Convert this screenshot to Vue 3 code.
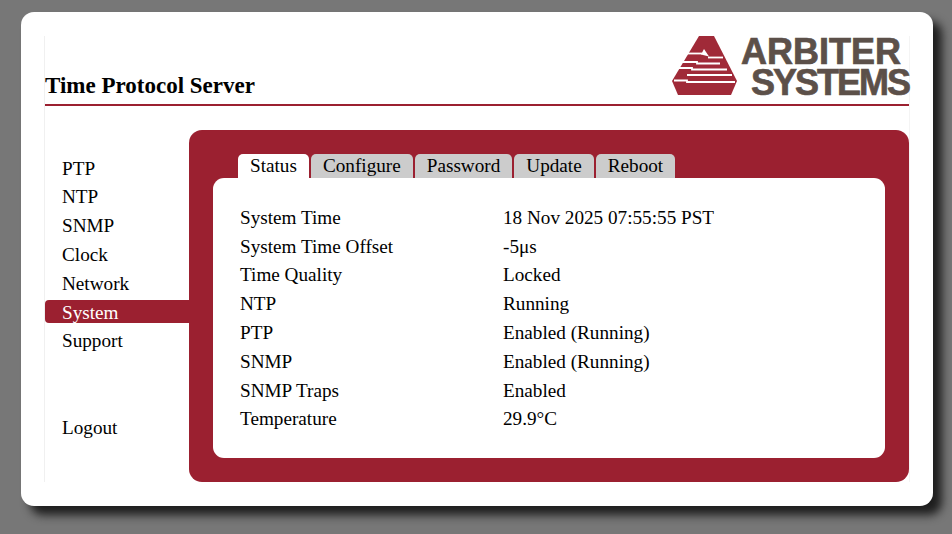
<script setup>
const navItems = [
  { label: 'PTP' },
  { label: 'NTP' },
  { label: 'SNMP' },
  { label: 'Clock' },
  { label: 'Network' },
  { label: 'System', active: true },
  { label: 'Support' },
  { label: '' },
  { label: '' },
  { label: 'Logout' }
]

const tabs = [
  { label: 'Status', active: true },
  { label: 'Configure' },
  { label: 'Password' },
  { label: 'Update' },
  { label: 'Reboot' }
]

const rows = [
  ['System Time', '18 Nov 2025 07:55:55 PST'],
  ['System Time Offset', '-5μs'],
  ['Time Quality', 'Locked'],
  ['NTP', 'Running'],
  ['PTP', 'Enabled (Running)'],
  ['SNMP', 'Enabled (Running)'],
  ['SNMP Traps', 'Enabled'],
  ['Temperature', '29.9°C']
]
</script>

<template>
  <div class="page">
    <div class="card">
      <div class="inner">
        <header class="header">
          <h1 class="title">Time Protocol Server</h1>
          <svg class="logo" width="237" height="68" viewBox="0 0 237 68">
            <polygon points="27,0 42,0 65,45 59,59 6,59 0,45" fill="#a02a38" />
            <polygon points="32,13 37,20.5 29,18.5" fill="#fff" />
            <g fill="none" stroke="#fff" stroke-width="1.8">
              <polyline points="15,17.5 30,17.5" />
              <polyline points="36,21.5 51,21.5" />
              <polyline points="10,26 25,26 25,27.5 48,27.5" />
              <polyline points="7,32 20,32 20,33.5 55,33.5" />
              <polyline points="15,39 60,39" />
              <polyline points="2,44.5 15,44.5 15,46 63,46" />
            </g>
            <text class="logo-text" x="69" y="28">ARBITER</text>
            <text class="logo-text tight" x="79" y="59">SYSTEMS</text>
          </svg>
        </header>

        <main class="main">
          <nav class="nav">
            <a
              v-for="(item, i) in navItems"
              :key="i"
              class="nav-item"
              :class="{ active: item.active }"
            >{{ item.label }}</a>
          </nav>

          <section class="panel">
            <div class="tabs">
              <span
                v-for="tab in tabs"
                :key="tab.label"
                class="tab"
                :class="{ active: tab.active }"
              >{{ tab.label }}</span>
            </div>
            <div class="content">
              <div v-for="row in rows" :key="row[0]" class="row">
                <span class="label">{{ row[0] }}</span>
                <span class="value">{{ row[1] }}</span>
              </div>
            </div>
          </section>
        </main>
      </div>
    </div>
  </div>
</template>

<style scoped>
.page {
  box-sizing: border-box;
  width: 952px;
  height: 534px;
  padding: 12px 19px 28px 21px;
  background: #777;
  font-family: "Liberation Serif", "Times New Roman", serif;
  font-size: 19.2px;
  color: #000;
  overflow: hidden;
}

.card {
  box-sizing: border-box;
  height: 494px;
  padding: 24px 23px 24px 23px;
  background: #fff;
  border-radius: 13px;
  box-shadow: 9px 9px 10px #1e1e1e;
}

.inner {
  height: 100%;
  border-left: 1px solid #f0f0f0;
  border-right: 1px solid #f4f4f4;
}

.header {
  display: flex;
  justify-content: space-between;
  align-items: flex-end;
  height: 68px;
  border-bottom: 2px solid #9b2030;
}

.title {
  margin: 0 0 5px;
  font-size: 23px;
  line-height: 26px;
  font-weight: bold;
}

.logo {
  display: block;
  overflow: visible;
}

.logo-text {
  font-family: "Liberation Sans", Arial, sans-serif;
  font-size: 36px;
  font-weight: bold;
  fill: #5c5049;
  stroke: #5c5049;
  stroke-width: 0.7px;
}

.logo-text.tight {
  letter-spacing: -2px;
}

.main {
  display: flex;
  margin-top: 24px;
  height: 352px;
}

.nav {
  display: flex;
  flex-direction: column;
  width: 144px;
  padding-top: 24.6px;
}

.nav-item {
  display: block;
  height: 28.8px;
  padding-left: 17px;
  line-height: 28.8px;
}

.nav-item.active {
  color: #fff;
  background: #9b2030;
  height: 23px;
  line-height: 25px;
  margin: 1.8px 0 4px;
  border-radius: 4px 0 0 4px;
}

.panel {
  flex: 1;
  padding: 24px 24px;
  background: #9b2030;
  border-radius: 13px;
}

.tabs {
  display: flex;
  gap: 2px;
  height: 24px;
  padding-left: 25px;
}

.tab {
  padding: 0 12px;
  line-height: 24px;
  background: #ccc;
  border-radius: 5px 5px 0 0;
}

.tab.active {
  background: #fff;
}

.content {
  height: 280px;
  box-sizing: border-box;
  padding: 25.85px 27px;
  background: #fff;
  border-radius: 11px;
}

.row {
  display: flex;
  height: 28.8px;
  line-height: 28.8px;
}

.label {
  width: 263px;
}
</style>

<style>
html, body {
  margin: 0;
  background: #777;
}
</style>
